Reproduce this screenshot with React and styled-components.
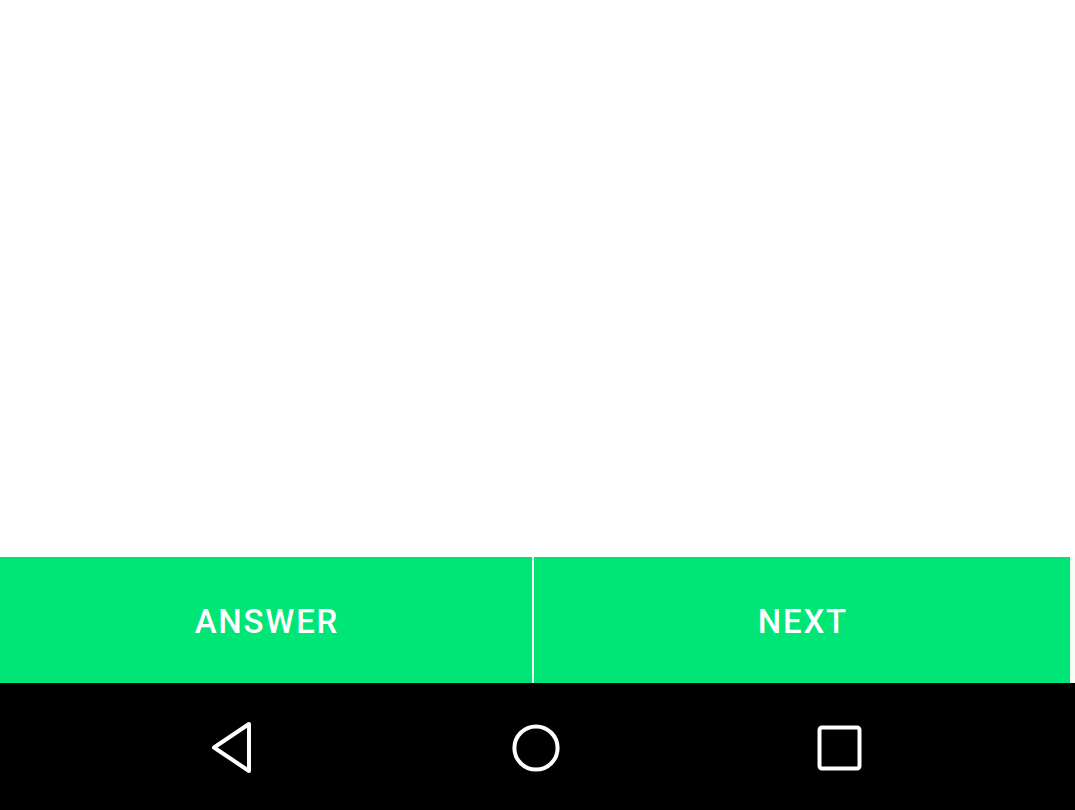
import React from 'react';
import styled, { createGlobalStyle } from 'styled-components';

const GlobalStyle = createGlobalStyle`
  html, body {
    margin: 0;
    padding: 0;
    background: #ffffff;
  }
  #root {
    height: 810px;
  }
`;

function BackIcon() {
  return (
    <svg width="44" height="54" viewBox="0 0 44 54">
      <path
        d="M39 3 L39 50 L4 26.5 Z"
        fill="none"
        stroke="#ffffff"
        strokeWidth="4"
        strokeLinejoin="round"
      />
    </svg>
  );
}

function HomeIcon() {
  return (
    <svg width="50" height="50" viewBox="0 0 50 50">
      <circle cx="25" cy="25" r="21.6" fill="none" stroke="#ffffff" strokeWidth="4" />
    </svg>
  );
}

function RecentsIcon() {
  return (
    <svg width="48" height="48" viewBox="0 0 48 48">
      <rect x="4.5" y="3.5" width="40" height="41" rx="2.5" fill="none" stroke="#ffffff" strokeWidth="4" />
    </svg>
  );
}

function App() {
  return (
    <>
      <GlobalStyle />
      <Screen>
        <Content />
        <ButtonRow>
          <ActionButton>ANSWER</ActionButton>
          <ActionButton>NEXT</ActionButton>
        </ButtonRow>
        <NavBar>
          <NavButton><BackIcon /></NavButton>
          <NavButton><HomeIcon /></NavButton>
          <NavButton><RecentsIcon /></NavButton>
        </NavBar>
      </Screen>
    </>
  );
}

export default App;

const Screen = styled.div`
  display: flex;
  flex-direction: column;
  width: 1075px;
  height: 810px;
  background: #ffffff;
`;

const Content = styled.div`
  height: 557px;
  background: #ffffff;
`;

const ButtonRow = styled.div`
  display: grid;
  grid-template-columns: 532px 1fr;
  column-gap: 2px;
  height: 126px;
  padding-right: 5px;
  background: #f4fff8;
`;

const ActionButton = styled.button`
  display: flex;
  align-items: center;
  justify-content: center;
  border: none;
  margin: 0;
  padding: 2px 0 0 0;
  background: #00e676;
  color: #ffffff;
  font-family: Roboto, "Liberation Sans", sans-serif;
  font-weight: 500;
  font-size: 33px;
  letter-spacing: 1.8px;
  text-indent: 1.8px;
  cursor: pointer;
`;

const NavBar = styled.div`
  display: flex;
  align-items: center;
  justify-content: center;
  gap: 203.5px;
  flex: 1;
  padding-right: 4px;
  background: #000000;
`;

const NavButton = styled.div`
  display: flex;
  align-items: center;
  justify-content: center;
  width: 100px;
  height: 60px;
  padding-top: 2px;
`;
